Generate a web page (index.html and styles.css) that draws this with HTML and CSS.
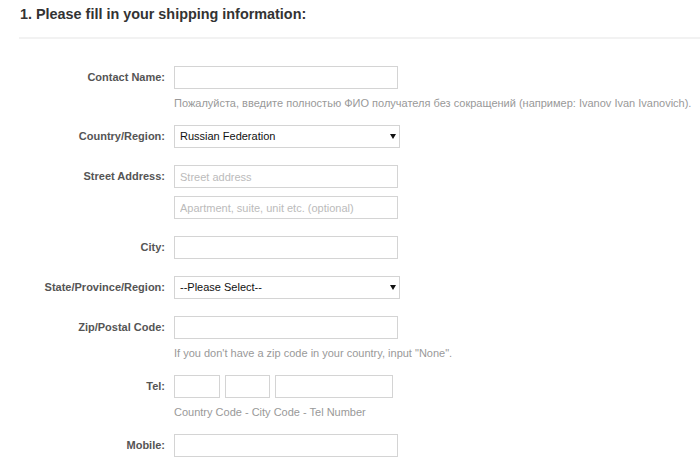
FILE: index.html
```html
<!DOCTYPE html>
<html>
<head>
<meta charset="utf-8">
<link rel="stylesheet" href="styles.css">
</head>
<body>
<div class="page">
  <h2 class="title">1. Please fill in your shipping information:</h2>
  <div class="divider"></div>
  <form class="form">
    <div class="row row-hint">
      <label class="label">Contact Name:</label>
      <div class="field">
        <input class="input" type="text">
        <div class="hint">Пожалуйста, введите полностью ФИО получателя без сокращений (например: Ivanov Ivan Ivanovich).</div>
      </div>
    </div>
    <div class="row">
      <label class="label">Country/Region:</label>
      <div class="field">
        <div class="select">Russian Federation<span class="arrow"></span></div>
      </div>
    </div>
    <div class="row">
      <label class="label">Street Address:</label>
      <div class="field stack">
        <input class="input" type="text" placeholder="Street address">
        <input class="input" type="text" placeholder="Apartment, suite, unit etc. (optional)">
      </div>
    </div>
    <div class="row">
      <label class="label">City:</label>
      <div class="field">
        <input class="input" type="text">
      </div>
    </div>
    <div class="row">
      <label class="label">State/Province/Region:</label>
      <div class="field">
        <div class="select">--Please Select--<span class="arrow"></span></div>
      </div>
    </div>
    <div class="row row-hint">
      <label class="label">Zip/Postal Code:</label>
      <div class="field">
        <input class="input" type="text">
        <div class="hint">If you don't have a zip code in your country, input "None".</div>
      </div>
    </div>
    <div class="row row-hint">
      <label class="label">Tel:</label>
      <div class="field">
        <div class="tel">
          <input class="input tel-a" type="text">
          <input class="input tel-b" type="text">
          <input class="input tel-c" type="text">
        </div>
        <div class="hint">Country Code - City Code - Tel Number</div>
      </div>
    </div>
    <div class="row">
      <label class="label">Mobile:</label>
      <div class="field">
        <input class="input" type="text">
      </div>
    </div>
  </form>
</div>
</body>
</html>
```
FILE: styles.css
```css
html, body {
  margin: 0;
  padding: 0;
  background: #fff;
}
body {
  font-family: "Liberation Sans", Arial, sans-serif;
  color: #333;
  overflow: hidden;
}
.page {
  padding-top: 3px;
}
.title {
  margin: 0 0 0 20px;
  font-size: 14.4px;
  line-height: 22px;
  font-weight: bold;
  color: #333;
}
.divider {
  margin: 12px 0 0 19px;
  height: 2px;
  background: #f2f2f2;
}
.form {
  margin-top: 27px;
}
.row {
  display: flex;
  align-items: flex-start;
  margin-bottom: 17px;
}
.row-hint {
  margin-bottom: 14px;
}
.label {
  width: 165px;
  flex: none;
  text-align: right;
  font-size: 11px;
  line-height: 16px;
  font-weight: bold;
  color: #555;
  padding-top: 3px;
  box-sizing: border-box;
}
.field {
  margin-left: 9px;
  display: flex;
  flex-direction: column;
}
.stack {
  gap: 8px;
}
.input {
  display: block;
  width: 224px;
  height: 23px;
  box-sizing: border-box;
  margin: 0;
  border: 1px solid #d4d4d4;
  border-radius: 0;
  padding: 0 5px;
  font-family: "Liberation Sans", Arial, sans-serif;
  font-size: 11px;
  color: #333;
  background: #fff;
  outline: none;
}
.input::placeholder {
  color: #bbb;
}
.select {
  position: relative;
  width: 226px;
  height: 23px;
  box-sizing: border-box;
  border: 1px solid #d4d4d4;
  padding: 0 5px;
  font-size: 11px;
  line-height: 21px;
  color: #111;
}
.arrow {
  position: absolute;
  right: 3px;
  top: 8px;
  width: 0;
  height: 0;
  border-left: 3px solid transparent;
  border-right: 3px solid transparent;
  border-top: 5px solid #111;
}
.hint {
  margin-top: 6px;
  font-size: 11px;
  line-height: 16px;
  color: #999;
  white-space: nowrap;
}
.tel {
  display: flex;
  gap: 5px;
}
.tel-a {
  width: 46px;
}
.tel-b {
  width: 45px;
}
.tel-c {
  width: 118px;
}
```
